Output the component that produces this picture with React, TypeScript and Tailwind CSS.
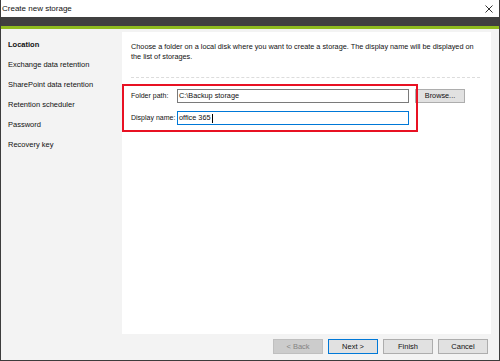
import React from 'react';

const steps = [
  'Location',
  'Exchange data retention',
  'SharePoint data retention',
  'Retention scheduler',
  'Password',
  'Recovery key',
];

const WinButton: React.FC<{ label: string; variant?: 'default' | 'focus' | 'disabled' }> = ({ label, variant = 'default' }) => {
  const cls =
    variant === 'disabled'
      ? 'bg-[#cccccc] border-[#bfbfbf] text-[#838383]'
      : variant === 'focus'
      ? 'bg-[#e1e1e1] border-[#0078d7] text-[#111]'
      : 'bg-[#e1e1e1] border-[#adadad] text-[#111]';
  return (
    <div className={`w-[50px] h-[15px] border flex items-center justify-center text-[7.5px] ${cls}`}>
      {label}
    </div>
  );
};

const App: React.FC = () => {
  return (
    <div className="w-[500px] h-[361px] flex flex-col bg-[#f3f3f3] border-x border-b border-[#3c3c3c] font-['Liberation_Sans',Arial,sans-serif] text-[#111] overflow-hidden">
      {/* Title bar */}
      <div className="h-[17px] bg-white flex items-center justify-between pl-[1px] pr-[6px]">
        <span className="text-[8px]">Create new storage</span>
        <svg width="8" height="8" viewBox="0 0 8 8">
          <path d="M0.5 0.5 L7.5 7.5 M7.5 0.5 L0.5 7.5" stroke="#333" strokeWidth="1" />
        </svg>
      </div>
      <div className="h-[9px] bg-[#404040]" />
      <div className="h-[3px] bg-[#8fbc1e]" />

      <div className="flex-1 flex">
        {/* Steps */}
        <div className="w-[121px] pt-[6px] pl-[7px] flex flex-col text-[7.5px]">
          {steps.map((s, i) => (
            <div key={s} className={`h-[20px] leading-[20px] ${i === 0 ? 'font-bold' : ''}`}>
              {s}
            </div>
          ))}
        </div>

        {/* Content */}
        <div className="flex-1 flex flex-col pr-[8px]">
          <div className="relative mt-[3px] h-[302px] bg-white pl-[9px] pr-[9px] pt-[10px] text-[7.3px]">
            <p className="leading-[10px]">
              Choose a folder on a local disk where you want to create a storage. The display name will be displayed on the list of storages.
            </p>
            <div className="mt-[15px] mr-[2px] border-t border-dashed border-[#dcdcdc]" />

            <div className="mt-[11px] flex flex-col gap-[8px]">
              <div className="flex items-center">
                <span className="w-[46px] whitespace-nowrap text-[7px]">Folder path:</span>
                <div className="w-[232px] h-[14px] border border-[#7a7a7a] flex items-center pl-[1px]">
                  C:\Backup storage
                </div>
                <div className="ml-[6px] w-[50px] h-[14px] border border-[#adadad] bg-[#e1e1e1] flex items-center justify-center">
                  Browse...
                </div>
              </div>
              <div className="flex items-center">
                <span className="w-[46px] whitespace-nowrap text-[7px]">Display name:</span>
                <div className="w-[232px] h-[14px] border border-[#0078d7] flex items-center pl-[1px]">
                  office 365
                  <span className="inline-block w-px h-[9px] bg-black ml-[1px]" />
                </div>
              </div>
            </div>

            {/* annotation */}
            <div className="absolute left-0 top-[52px] w-[296px] h-[48px] border-2 border-[#e81123]" />
          </div>

          <div className="mt-[5px] mr-[3px] flex justify-end gap-[5px]">
            <WinButton label="< Back" variant="disabled" />
            <WinButton label="Next >" variant="focus" />
            <WinButton label="Finish" />
            <WinButton label="Cancel" />
          </div>
        </div>
      </div>
    </div>
  );
};

export default App;
